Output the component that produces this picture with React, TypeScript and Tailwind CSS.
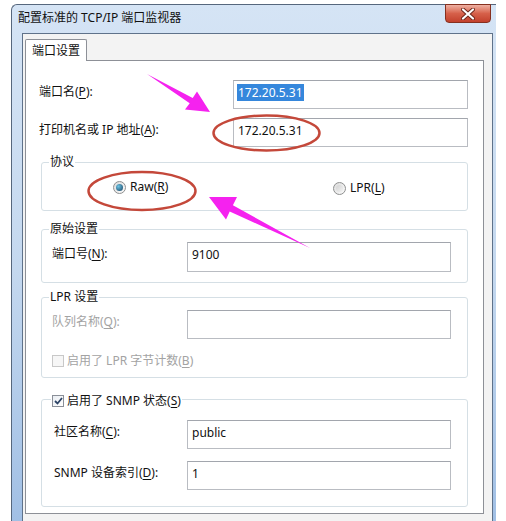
import React from 'react';

const U = ({ children }: { children: React.ReactNode }) => (
  <span className="underline underline-offset-[2px] decoration-[1px]">{children}</span>
);

function Field({ children, className = '', selected = false }: { children?: React.ReactNode; className?: string; selected?: boolean }) {
  return (
    <div className={`h-[29px] border border-[#b9bcc2] border-t-[#a2a6ad] bg-white pl-[3px] pt-[3px] leading-[17px] text-[12px] text-[#111] ${className}`}>
      {selected ? <span className="bg-[#3587dc] text-white px-[1px]">{children}</span> : <span className="pl-[1px]">{children}</span>}
    </div>
  );
}

function Row({ label, children, labelWidth, gray = false }: { label: React.ReactNode; children: React.ReactNode; labelWidth: string; gray?: boolean }) {
  return (
    <div className="flex items-start">
      <div className={`${labelWidth} pt-[4px] leading-[16px] ${gray ? 'text-[#a3a3a3]' : 'text-[#111]'}`}>{label}</div>
      {children}
    </div>
  );
}

function Radio({ checked }: { checked?: boolean }) {
  return (
    <span className="w-[13px] h-[13px] rounded-full border border-[#8e8f8f] bg-gradient-to-br from-[#dcdcdc] to-[#fbfbfb] flex items-center justify-center">
      {checked ? (
        <span className="w-[7px] h-[7px] rounded-full bg-[radial-gradient(circle_at_35%_35%,#6cc3e4,#163f5e)]" />
      ) : (
        <span className="w-[7px] h-[7px] rounded-full bg-gradient-to-br from-[#d2d2d2] to-[#f2f2f2]" />
      )}
    </span>
  );
}

function GroupLabel({ children }: { children: React.ReactNode }) {
  return <div className="-mt-[9px] ml-[7px] w-fit bg-white px-[1px] h-[16px] leading-[16px] text-[#111]">{children}</div>;
}

export default function App() {
  return (
    <div className="relative w-[506px] h-[521px] overflow-hidden bg-white text-[12px] font-['Noto_Sans','Noto_Sans_CJK_SC',sans-serif]">
      <div className="ml-[11px] mt-[4px] w-[485px] h-[530px] border-l border-t border-[#56677d] rounded-tl-[6px] bg-gradient-to-b from-[#d5e4f5] via-[#c4d8ef] to-[#9fbee4] flex flex-col">
        {/* title bar */}
        <div className="h-[28px] flex items-start pl-[6px] pr-[5px]">
          <div className="pt-[5px] leading-[16px] text-[#111]">配置标准的 TCP/IP 端口监视器</div>
          <div className="ml-auto -mt-[1px] w-[46px] h-[19px] rounded-b-[4px] border border-[#86301f] bg-gradient-to-b from-[#eeb0a2] via-[#d6604a] to-[#c2402c] flex items-center justify-center">
            <svg width="14" height="12" viewBox="0 0 14 12">
              <path d="M2 1.5 L12 10.5 M12 1.5 L2 10.5" stroke="#6b2418" strokeWidth="4" strokeLinecap="round" />
              <path d="M2 1.5 L12 10.5 M12 1.5 L2 10.5" stroke="#ffffff" strokeWidth="2.2" strokeLinecap="round" />
            </svg>
          </div>
        </div>
        {/* client */}
        <div className="pl-[10px] pr-[4px] flex-1 flex">
          <div className="flex-1 border-l border-t border-r border-[#5f728a] bg-[#f3f3f3] pl-[2px] pr-[8px] pt-[5px]">
            <div className="relative z-10 -mb-[1px] w-[62px] h-[22px] border border-b-0 border-[#8d9097] rounded-t-[2px] bg-white flex items-center justify-center text-[#111]">
              端口设置
            </div>
            <div className="h-[454px] border border-[#8d9097] bg-white pl-[13px] pr-[15px] pt-[19px] flex flex-col">
              <Row label={<>端口名(<U>P</U>):</>} labelWidth="w-[194px]">
                <Field className="w-[235px]" selected>172.20.5.31</Field>
              </Row>
              <div className="mt-[9px]">
                <Row label={<>打印机名或 IP 地址(<U>A</U>):</>} labelWidth="w-[194px]">
                  <Field className="w-[235px]">172.20.5.31</Field>
                </Row>
              </div>

              {/* 协议 */}
              <div className="mt-[15px] ml-[2px] border border-[#d5dfe5] rounded-[3px] pb-[15px]">
                <GroupLabel>协议</GroupLabel>
                <div className="mt-[9px] pl-[71px] flex items-center h-[16px] text-[#111]">
                  <div className="w-[220px] flex items-center gap-[4px]">
                    <Radio checked />
                    <span>Raw(<U>R</U>)</span>
                  </div>
                  <div className="flex items-center gap-[4px] mt-[2px]">
                    <Radio />
                    <span>LPR(<U>L</U>)</span>
                  </div>
                </div>
              </div>

              {/* 原始设置 */}
              <div className="mt-[18px] ml-[2px] border border-[#d5dfe5] rounded-[3px] pl-[10px] pr-[15px] pb-[10px]">
                <div className="-ml-[10px]">
                  <GroupLabel>原始设置</GroupLabel>
                </div>
                <div className="mt-[5px]">
                  <Row label={<>端口号(<U>N</U>):</>} labelWidth="w-[135px]">
                    <Field className="w-[264px] h-[30px]">9100</Field>
                  </Row>
                </div>
              </div>

              {/* LPR 设置 */}
              <div className="mt-[14px] ml-[2px] border border-[#d5dfe5] rounded-[3px] pl-[10px] pr-[15px] pb-[8px]">
                <div className="-ml-[10px]">
                  <GroupLabel>LPR 设置</GroupLabel>
                </div>
                <div className="mt-[5px]">
                  <Row label={<>队列名称(<U>Q</U>):</>} labelWidth="w-[135px]" gray>
                    <Field className="w-[264px]" />
                  </Row>
                </div>
                <div className="mt-[14px] h-[16px] flex items-center gap-[3px] text-[#a3a3a3]">
                  <span className="w-[12px] h-[12px] border border-[#c8c8c8] bg-[#f6f6f6]" />
                  <span>启用了 LPR 字节计数(<U>B</U>)</span>
                </div>
              </div>

              {/* SNMP */}
              <div className="mt-[21px] ml-[2px] border border-[#d5dfe5] rounded-[3px] pl-[10px] pr-[15px] pb-[16px]">
                <div className="-mt-[7px] -ml-[1px] w-fit bg-white px-[1px] h-[16px] flex items-center gap-[3px] text-[#111]">
                  <span className="w-[12px] h-[12px] border border-[#8a8f98] bg-gradient-to-br from-[#e9edf2] to-white flex items-center justify-center">
                    <svg width="9" height="8" viewBox="0 0 9 8">
                      <path d="M1 4 L3.5 6.5 L8 1" fill="none" stroke="#2d4466" strokeWidth="1.8" />
                    </svg>
                  </span>
                  <span>启用了 SNMP 状态(<U>S</U>)</span>
                </div>
                <div className="mt-[11px]">
                  <Row label={<span className="pl-[2px]">社区名称(<U>C</U>):</span>} labelWidth="w-[135px]">
                    <Field className="w-[264px]">public</Field>
                  </Row>
                </div>
                <div className="mt-[12px]">
                  <Row label={<span className="pl-[2px]">SNMP 设备索引(<U>D</U>):</span>} labelWidth="w-[135px]">
                    <Field className="w-[264px]">1</Field>
                  </Row>
                </div>
              </div>
            </div>
          </div>
        </div>
      </div>

      {/* annotations */}
      <svg className="pointer-events-none absolute left-0 top-0" width="506" height="521">
        <ellipse cx="266.5" cy="133" rx="53" ry="17.5" fill="none" stroke="#c4483a" strokeWidth="2.5" />
        <ellipse cx="142" cy="191" rx="53.5" ry="19" fill="none" stroke="#c4483a" strokeWidth="2.5" />
        <polygon points="147,74 189.7,103.2 185,109.5 210,112 197,91.5 192.7,98" fill="#f522ef" />
        <polygon points="310,248 232.9,205.2 237,197 209,197 226,219.5 229.7,211.4" fill="#f522ef" />
      </svg>
    </div>
  );
}
